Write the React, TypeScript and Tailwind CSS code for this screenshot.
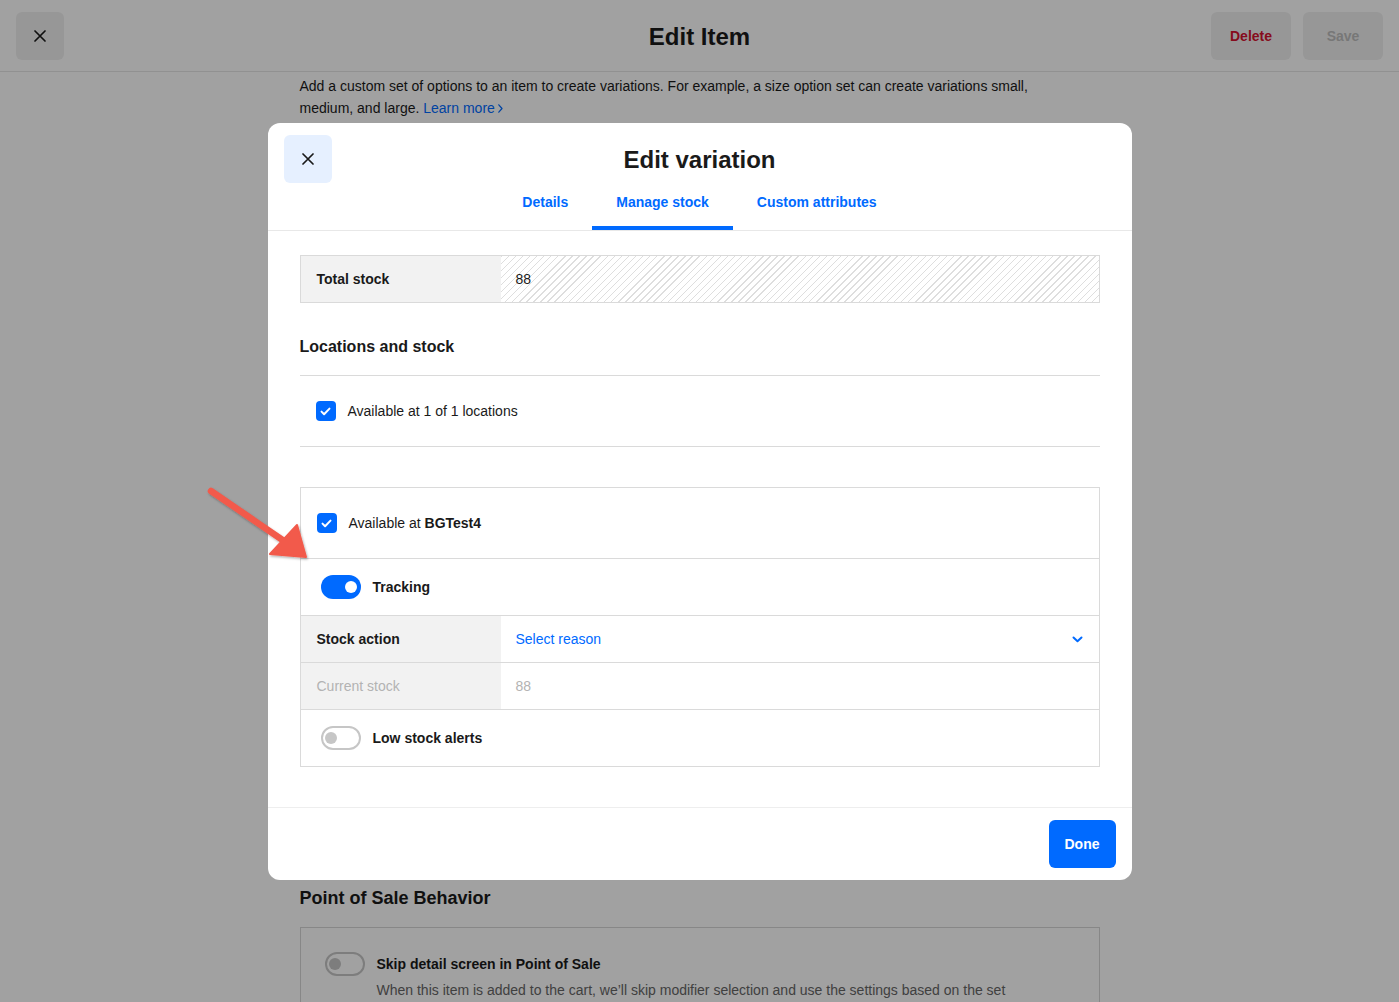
import React from 'react';

function CloseIcon() {
  return (
    <svg width="12" height="12" viewBox="0 0 12 12" fill="none">
      <path d="M1 1L11 11M11 1L1 11" stroke="#1a1a1a" strokeWidth="1.7" strokeLinecap="round" />
    </svg>
  );
}

function Checkbox() {
  return (
    <div className="flex h-5 w-5 items-center justify-center rounded-[4px] bg-[#006aff]">
      <svg width="11" height="9" viewBox="0 0 11 9" fill="none">
        <path d="M1.5 4.6L4.1 7.2L9.5 1.6" stroke="white" strokeWidth="2" strokeLinecap="round" strokeLinejoin="round" />
      </svg>
    </div>
  );
}

function Toggle({ on }: { on: boolean }) {
  if (on) {
    return (
      <div className="flex h-6 w-10 items-center justify-end rounded-full bg-[#006aff] pr-1">
        <div className="h-3 w-3 rounded-full bg-white" />
      </div>
    );
  }
  return (
    <div className="flex h-6 w-10 items-center rounded-full border-2 border-[#c6c6c6] bg-white pl-[2px]">
      <div className="h-3 w-3 rounded-full bg-[#c6c6c6]" />
    </div>
  );
}

function FieldRow({ label, children, muted }: { label: string; children: React.ReactNode; muted?: boolean }) {
  return (
    <div className="flex h-[47px] border-t border-[#dadada]">
      <div
        className={
          'flex w-[200px] items-center bg-[#f2f2f2] px-4 text-sm ' +
          (muted ? 'text-[#b3b3b3]' : 'font-semibold text-[#1a1a1a]')
        }
      >
        {label}
      </div>
      <div className="flex flex-1 items-center pl-[15px] pr-4 text-sm">{children}</div>
    </div>
  );
}

function EditVariationModal() {
  const tabs = ['Details', 'Manage stock', 'Custom attributes'];

  return (
    <div className="flex w-[864px] flex-col overflow-hidden rounded-xl bg-white">
      <div className="border-b border-[#e8e8e8] px-4 pt-3">
        <div className="relative flex h-12 items-center justify-center">
          <button className="absolute left-0 top-0 flex h-12 w-12 items-center justify-center rounded-md bg-[#e6f0ff]">
            <CloseIcon />
          </button>
          <h2 className="pt-[2px] text-2xl font-bold text-[#1a1a1a]">Edit variation</h2>
        </div>
        <div className="flex justify-center">
          {tabs.map((tab) => (
            <div
              key={tab}
              className={
                'h-[47px] border-b-4 px-6 pt-[9px] text-sm font-semibold leading-5 text-[#006aff] ' +
                (tab === 'Manage stock' ? 'border-[#006aff]' : 'border-transparent')
              }
            >
              {tab}
            </div>
          ))}
        </div>
      </div>

      <div className="px-8 pb-10 pt-6">
        <div className="flex h-12 border border-[#dadada]">
          <div className="flex w-[200px] items-center bg-[#f2f2f2] px-4 text-sm font-semibold">Total stock</div>
          <div className="flex flex-1 items-center bg-[repeating-linear-gradient(135deg,#dedede_0px,#dedede_1px,transparent_1px,transparent_5px)] pl-[15px] text-sm">
            <span className="bg-white/0">88</span>
          </div>
        </div>

        <h3 className="mt-8 text-base font-semibold leading-6">Locations and stock</h3>
        <div className="mt-4 flex h-[72px] items-center gap-3 border-y border-[#dadada] px-4 text-sm">
          <Checkbox />
          <span>Available at 1 of 1 locations</span>
        </div>

        <div className="mt-10 border border-[#dadada]">
          <div className="flex h-[70px] items-center gap-3 px-4 text-sm">
            <Checkbox />
            <span>
              Available at <span className="font-semibold">BGTest4</span>
            </span>
          </div>
          <div className="flex h-[57px] items-center gap-3 border-t border-[#dadada] px-5 text-sm font-semibold">
            <Toggle on />
            <span>Tracking</span>
          </div>
          <FieldRow label="Stock action">
            <span className="flex-1 text-[#006aff]">Select reason</span>
            <svg width="11" height="7" viewBox="0 0 11 7" fill="none">
              <path d="M1.5 1.5L5.5 5.2L9.5 1.5" stroke="#006aff" strokeWidth="2" strokeLinecap="round" strokeLinejoin="round" />
            </svg>
          </FieldRow>
          <FieldRow label="Current stock" muted>
            <span className="text-[#b3b3b3]">88</span>
          </FieldRow>
          <div className="flex h-[57px] items-center gap-3 border-t border-[#dadada] px-5 text-sm font-semibold">
            <Toggle on={false} />
            <span>Low stock alerts</span>
          </div>
        </div>
      </div>

      <div className="flex justify-end border-t border-[#eeeeee] px-4 py-3">
        <button className="h-12 rounded-md bg-[#006aff] px-4 text-sm font-semibold text-white">Done</button>
      </div>
    </div>
  );
}

export default function App() {
  return (
    <div className="relative h-[1002px] w-full overflow-hidden bg-white font-['Liberation_Sans',Arial,sans-serif] text-[#1a1a1a]">
      <header className="grid h-[72px] grid-cols-[1fr_auto_1fr] items-center border-b border-[#e6e6e6] px-4">
        <button className="flex h-12 w-12 items-center justify-center rounded-md bg-[#f0f0f0]">
          <CloseIcon />
        </button>
        <h1 className="pt-[2px] text-2xl font-bold">Edit Item</h1>
        <div className="flex justify-end gap-3">
          <button className="h-12 w-20 rounded-md bg-[#f0f0f0] text-sm font-semibold text-[#d4122e]">Delete</button>
          <button className="h-12 w-20 rounded-md bg-[#f0f0f0] text-sm font-semibold text-[#bdbdbd]">Save</button>
        </div>
      </header>

      <main className="mx-auto w-[800px] pt-[3px]">
        <p className="text-sm leading-[22px]">
          Add a custom set of options to an item to create variations. For example, a size option set can create variations small,
          <br />
          medium, and large.{' '}
          <span className="inline-flex items-center gap-[3px] text-[#006aff]">
            Learn more
            <svg width="5" height="9" viewBox="0 0 5 9" fill="none">
              <path d="M0.8 0.8L4 4.5L0.8 8.2" stroke="#006aff" strokeWidth="1.2" strokeLinecap="round" strokeLinejoin="round" />
            </svg>
          </span>
        </p>

        <div className="h-[767px]" />

        <h2 className="text-lg font-bold leading-6">Point of Sale Behavior</h2>
        <div className="mt-[17px] border border-[#d6d6d6] px-6 pt-6 pb-6">
          <div className="flex items-start gap-3">
            <Toggle on={false} />
            <div className="pt-[1px]">
              <div className="text-sm font-semibold leading-[22px]">Skip detail screen in Point of Sale</div>
              <div className="mt-1 text-sm leading-[22px] text-[#666666]">
                When this item is added to the cart, we’ll skip modifier selection and use the settings based on the set
                <br />
                default options.
              </div>
            </div>
          </div>
        </div>
      </main>

      <div className="absolute inset-0 flex items-start justify-center bg-black/[0.37] pt-[123px]">
        <EditVariationModal />
      </div>

      <svg className="pointer-events-none absolute left-0 top-0" width="1399" height="1002" viewBox="0 0 1399 1002">
        <defs>
          <filter id="arrowShadow" x="-20%" y="-20%" width="140%" height="140%">
            <feDropShadow dx="1" dy="1.5" stdDeviation="1.2" floodColor="#000" floodOpacity="0.3" />
          </filter>
        </defs>
        <g filter="url(#arrowShadow)" fill="#f25a4b" stroke="#f25a4b">
          <line x1="211" y1="491" x2="284" y2="541" strokeWidth="6.5" strokeLinecap="round" />
          <polygon points="306,557 270,554 297,525" strokeWidth="2" strokeLinejoin="round" />
        </g>
      </svg>
    </div>
  );
}
